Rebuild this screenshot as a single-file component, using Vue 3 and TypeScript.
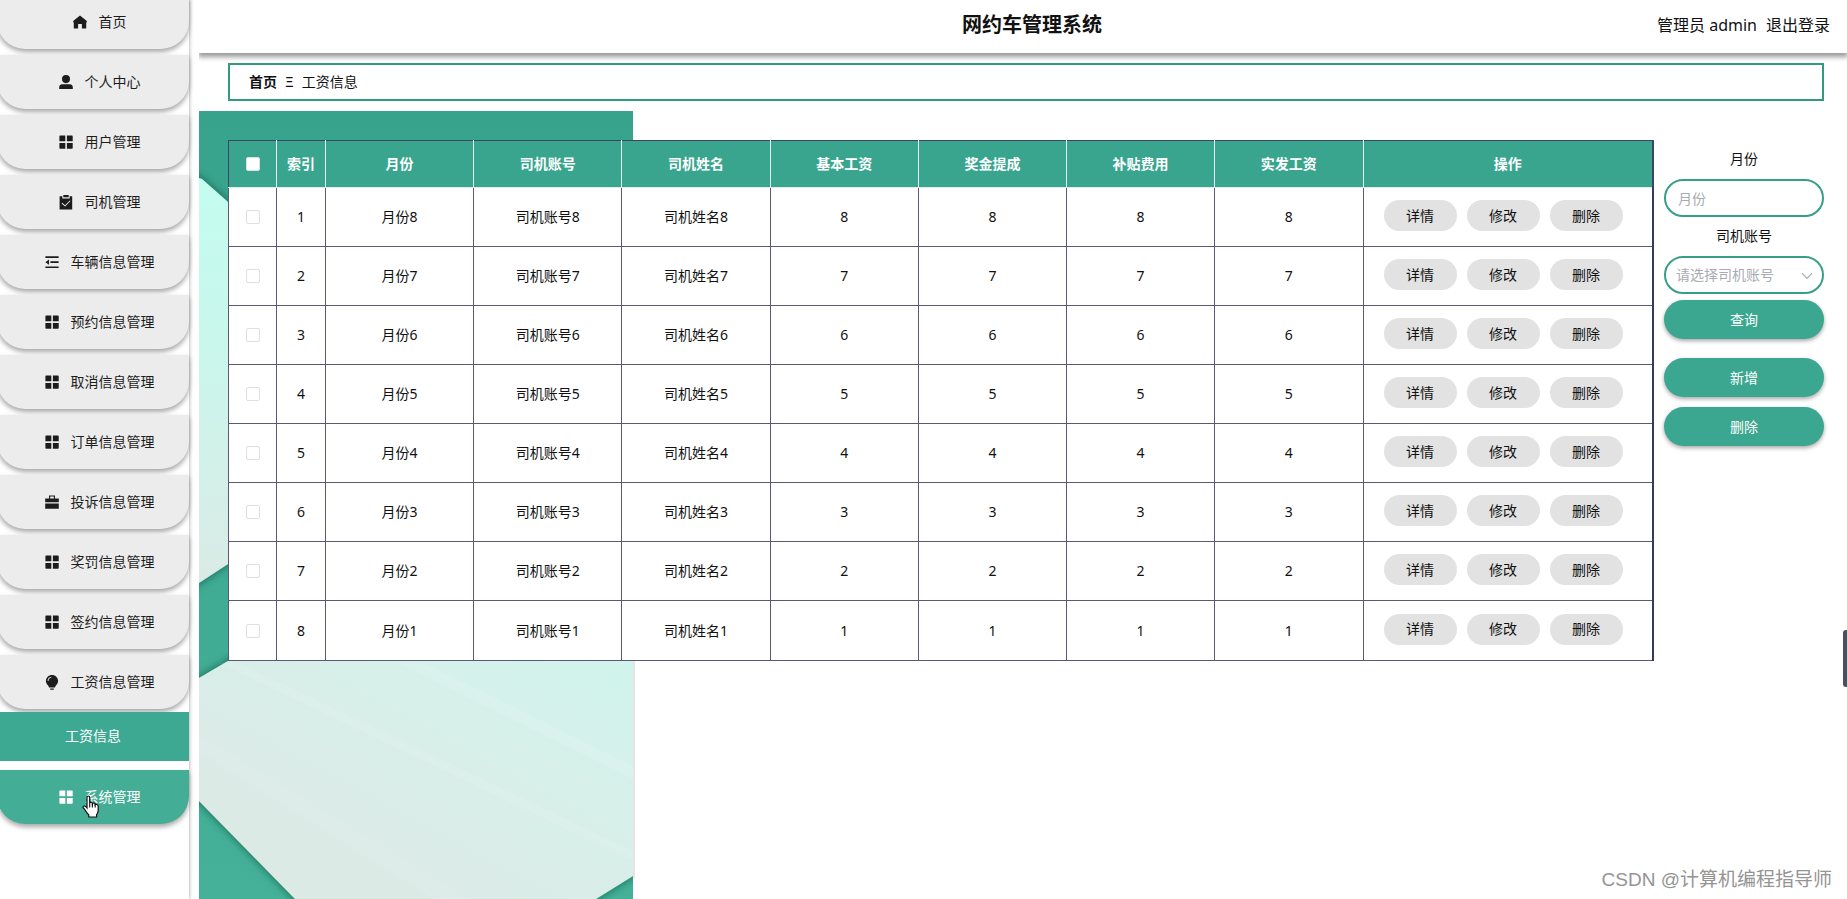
<script setup lang="ts">
import { ref } from 'vue'

type IconName = 'home' | 'user' | 'grid' | 'clip' | 'fold' | 'case' | 'bulb'
interface MenuItem { label: string; icon: IconName; active?: boolean; child?: string }

const menu: MenuItem[] = [
  { label: '首页', icon: 'home' },
  { label: '个人中心', icon: 'user' },
  { label: '用户管理', icon: 'grid' },
  { label: '司机管理', icon: 'clip' },
  { label: '车辆信息管理', icon: 'fold' },
  { label: '预约信息管理', icon: 'grid' },
  { label: '取消信息管理', icon: 'grid' },
  { label: '订单信息管理', icon: 'grid' },
  { label: '投诉信息管理', icon: 'case' },
  { label: '奖罚信息管理', icon: 'grid' },
  { label: '签约信息管理', icon: 'grid' },
  { label: '工资信息管理', icon: 'bulb', child: '工资信息' },
  { label: '系统管理', icon: 'grid', active: true },
]

const icons: Record<IconName, string> = {
  home: 'M7 0.4 L13.8 6 V7.4 H13.2 V13.4 H8.9 V8.9 H5.1 V13.4 H0.8 V7.4 H0.2 V6 Z',
  user: 'M7 0 A4 4.1 0 0 1 7 8.2 A4 4.1 0 0 1 7 0 Z M3.2 9.2 H10.8 Q13.8 9.4 13.8 12.4 V14 H0.2 V12.4 Q0.2 9.4 3.2 9.2 Z',
  grid: 'M1.1 0.5 H6.3 V6.2 H0.4 V1.2 Q0.4 0.5 1.1 0.5 Z M7.9 0.5 H13 Q13.7 0.5 13.7 1.2 V6.2 H7.9 Z M0.4 7.9 H6.3 V13.7 H1.1 Q0.4 13.7 0.4 13 Z M7.9 7.9 H13.7 V13 Q13.7 13.7 13 13.7 H7.9 Z',
  clip: 'M0.6 1.2 H3.3 V3.4 H10.7 V1.2 H13.2 V14.4 H0.6 Z M4.3 0 H9.7 V2.3 H4.3 Z M3.2 7.8 L2.6 8.5 L6 11.5 L11.5 6.1 L10.9 5.4 L6 10.2 Z',
  fold: 'M0.4 1.2 H13.6 V2.9 H0.4 Z M5.4 6.3 H13.6 V8 H5.4 Z M0.4 11.4 H13.6 V13.1 H0.4 Z M0.4 7.2 L4 4.6 V9.7 Z',
  case: 'M4 0.4 H10 V3.6 H13.8 V7.2 H0.2 V3.6 H4 Z M5.1 1.6 V3.6 H8.9 V1.6 Z M0.2 8.4 H13.8 V13.8 H0.2 Z',
  bulb: 'M7 0 C10.4 0 13.1 2.7 13.1 6 C13.1 8.9 10.6 10 9.9 12.5 H4.1 C3.4 10 0.9 8.9 0.9 6 C0.9 2.7 3.6 0 7 0 Z M2.6 6 H3.5 A3.6 3.6 0 0 1 6.4 2.6 V1.8 A4.5 4.5 0 0 0 2.6 6 Z M5.2 13.4 H8.8 V14.8 H5.2 Z',
}

const columns = ['月份', '司机账号', '司机姓名', '基本工资', '奖金提成', '补贴费用', '实发工资']
const rows = [8, 7, 6, 5, 4, 3, 2, 1]
const actions = ['详情', '修改', '删除']
const month = ref('')
const account = ref('')
</script>

<template>
  <div class="app">
    <aside class="sidebar">
      <nav class="menu">
        <template v-for="m in menu" :key="m.label">
          <a href="#" class="item" :class="{ active: m.active }">
            <svg class="icon" viewBox="0 0 14 15" aria-hidden="true"><path :d="icons[m.icon]" fill-rule="evenodd" /></svg>
            <span>{{ m.label }}</span>
            <svg v-if="m.active" class="cursor" viewBox="0 0 18 24" aria-hidden="true">
              <path d="M5 2.4 Q5 1 6.3 1 Q7.7 1 7.7 2.4 V8 Q8 7 9.2 7.2 Q10.4 7.4 10.4 8.6 Q11 7.8 12.2 8.1 Q13.2 8.4 13.2 9.6 Q14 9 15 9.5 Q16.2 10 16.2 11.4 V15.5 Q16 18 14.6 19.6 V22 H6.8 V20 Q4.6 18 3.4 15.6 Q2.6 14 1.2 12.8 Q0.6 11.4 2 11 Q3.4 10.8 5 13 Z" fill="#fff" stroke="#111" stroke-width="1.2" />
              <path d="M7.7 8 V12.5 M10.4 8.6 V12.5 M13.2 9.6 V12.5" fill="none" stroke="#111" stroke-width="1.1" />
            </svg>
          </a>
          <a v-if="m.child" href="#" class="sub">{{ m.child }}</a>
        </template>
      </nav>
    </aside>

    <div class="main">
      <header class="top">
        <h1>网约车管理系统</h1>
        <div class="account">
          <span>管理员 admin</span>
          <a href="#">退出登录</a>
        </div>
      </header>

      <nav class="crumb" aria-label="breadcrumb">
        <a href="#"><b>首页</b></a>
        <span class="sep">Ξ</span>
        <span>工资信息</span>
      </nav>

      <main class="content">
        <svg class="art" viewBox="0 0 440 788" aria-hidden="true">
          <defs>
            <linearGradient id="green" x1="0" y1="0" x2="0" y2="1">
              <stop offset="0" stop-color="#38a38c" />
              <stop offset="1" stop-color="#45b198" />
            </linearGradient>
            <linearGradient id="mint" x1="0" y1="0" x2="0" y2="1">
              <stop offset="0" stop-color="#c3fdf0" />
              <stop offset="0.4" stop-color="#c9f7ec" />
              <stop offset="1" stop-color="#dbeae5" />
            </linearGradient>
            <linearGradient id="pale" gradientUnits="userSpaceOnUse" x1="400" y1="480" x2="230" y2="790">
              <stop offset="0" stop-color="#cdf6ee" />
              <stop offset="0.5" stop-color="#d7f0ea" />
              <stop offset="1" stop-color="#dceae6" />
            </linearGradient>
            <filter id="shade" x="-10%" y="-10%" width="120%" height="120%">
              <feDropShadow dx="0" dy="0" stdDeviation="5" flood-color="#03493a" flood-opacity="0.75" />
            </filter>
            <clipPath id="frame"><rect width="434" height="788" /></clipPath>
          </defs>
          <rect x="432" y="540" width="4" height="227" fill="#e4e4e4" />
          <g clip-path="url(#frame)">
            <rect width="434" height="788" fill="url(#green)" />
            <path d="M-20 52 L0 67 L3 68 L29 91 L250 280 L29 453 L0 472 L-20 485 Z" fill="url(#mint)" filter="url(#shade)" />
            <path d="M-20 579 L0 567 L29 550 L250 420 L460 420 L460 749 L434 765 L397 788 L360 810 L118 810 L96 788 L0 690 L-20 670 Z" fill="url(#pale)" filter="url(#shade)" />
            <g fill="#fff" fill-opacity="0.1">
              <path d="M20 552 L40 552 L434 740 L434 750 Z" />
              <path d="M200 552 L225 552 L434 655 L434 668 Z" />
              <path d="M0 625 L270 788 L235 788 L0 640 Z" fill-opacity="0.08" />
            </g>
          </g>
        </svg>

        <div class="table-box">
          <table class="grid">
            <colgroup>
              <col class="c-check" /><col class="c-index" />
              <col v-for="c in columns" :key="c" />
              <col class="c-action" />
            </colgroup>
            <thead>
              <tr>
                <th><input type="checkbox" aria-label="全选" /></th>
                <th>索引</th>
                <th v-for="c in columns" :key="c">{{ c }}</th>
                <th>操作</th>
              </tr>
            </thead>
            <tbody>
              <tr v-for="(n, i) in rows" :key="n">
                <td><input type="checkbox" :aria-label="'选择' + (i + 1)" /></td>
                <td>{{ i + 1 }}</td>
                <td v-for="(c, k) in columns" :key="c">{{ k < 3 ? c + n : n }}</td>
                <td>
                  <div class="actions">
                    <button v-for="a in actions" :key="a" type="button">{{ a }}</button>
                  </div>
                </td>
              </tr>
            </tbody>
          </table>
        </div>

        <form class="filter" @submit.prevent>
          <label for="month">月份</label>
          <input id="month" v-model="month" type="text" placeholder="月份" />
          <label for="account">司机账号</label>
          <div class="select">
            <select id="account" v-model="account">
              <option value="">请选择司机账号</option>
            </select>
            <svg class="chevron" viewBox="0 0 12 8" aria-hidden="true"><path d="M1 1.2 L6 6.4 L11 1.2" fill="none" stroke="#a8acb4" stroke-width="1.2" /></svg>
          </div>
          <button type="submit">查询</button>
          <button type="button" class="add">新增</button>
          <button type="button" class="del">删除</button>
        </form>
      </main>
    </div>

    <div class="handle"></div>
    <div class="watermark">CSDN @计算机编程指导师</div>
  </div>
</template>

<style>
body {
  margin: 0;
  background: #fff;
}
</style>

<style scoped>
.app {
  position: relative;
  display: flex;
  gap: 10px;
  height: 100vh;
  overflow: hidden;
  box-sizing: border-box;
  background: #fff;
  color: #111;
  font: 14px/20px "Noto Sans", "Noto Sans CJK SC", sans-serif;
}
.app * {
  box-sizing: border-box;
}
a {
  color: inherit;
  text-decoration: none;
}
button,
input,
select {
  font: inherit;
}
.sidebar {
  flex: 0 0 189px;
  box-shadow: 0 0 4px rgba(0, 0, 0, 0.4);
}
.menu {
  display: flex;
  flex-direction: column;
  gap: 6px;
  margin: -5px 0 0 -3px;
}
.item {
  position: relative;
  display: flex;
  align-items: center;
  justify-content: center;
  gap: 12px;
  height: 54px;
  padding-left: 13px;
  border-radius: 0 0 28px 28px;
  background: #ececec;
  color: #1c1c1c;
  box-shadow: 0 3px 5px rgba(0, 0, 0, 0.35);
}
.item.active {
  background: #44ad96;
  color: #fff;
}
.icon {
  width: 14px;
  height: 15px;
  fill: currentColor;
}
.cursor {
  position: absolute;
  left: 85px;
  top: 25px;
  width: 18px;
  height: 24px;
}
.sub {
  position: relative;
  height: 49px;
  margin: -3px 0 3px;
  background: #3da992;
  color: #fff;
  line-height: 48px;
  text-align: center;
}
.main {
  flex: 1;
  min-width: 0;
  display: flex;
  flex-direction: column;
}
.top {
  display: grid;
  grid-template-columns: 1fr auto 1fr;
  align-items: center;
  height: 53px;
  padding: 0 17px 4px 35px;
  box-shadow: 0 3px 5px 1px rgba(0, 0, 0, 0.4);
  clip-path: inset(0 0 -12px 0);
}
.top h1 {
  grid-column: 2;
  margin: 0;
  font-size: 20px;
  line-height: 28px;
}
.account {
  display: flex;
  justify-content: flex-end;
  gap: 9px;
  font-size: 16px;
  line-height: 24px;
}
.crumb {
  display: flex;
  align-items: center;
  gap: 8px;
  height: 38px;
  margin: 10px 23px 10px 29px;
  padding: 0 19px;
  border: 2px solid #30997f;
}
.content {
  position: relative;
  flex: 1;
  display: flex;
  align-items: flex-start;
  gap: 10px;
  padding: 29px 23px 0 29px;
}
.art {
  position: absolute;
  left: 0;
  top: 0;
  width: 440px;
  height: 788px;
}
.table-box {
  position: relative;
  flex: 1;
  min-width: 0;
}
.grid {
  width: 100%;
  table-layout: fixed;
  border-collapse: collapse;
  background: #fff;
  text-align: center;
  border: 1px solid #3c4564;
  border-right: 2px solid #3c4564;
}
.c-check {
  width: 48px;
}
.c-index {
  width: 49px;
}
.c-action {
  width: 290px;
}
.grid th {
  height: 47px;
  padding: 0;
  border-right: 1px solid #e4f4f0;
  border-bottom: 1px solid #d8efea;
  background: #39a58e;
  color: #fff;
}
.grid td {
  height: 59px;
  padding: 0;
  border: 1px solid #5c5873;
}
.grid tbody tr:last-child td {
  height: 60px;
}
.grid td:last-child {
  border-right: 2px solid #353a58;
}
.grid input {
  display: block;
  appearance: none;
  width: 14px;
  height: 14px;
  margin: 0 auto;
  border: 1px solid #dcdfe6;
  border-radius: 2px;
  background: #fff;
}
.actions {
  display: flex;
  gap: 10px;
  padding: 0 0 3px 20px;
}
.actions button {
  width: 73px;
  height: 31px;
  padding: 0;
  border: 0;
  border-radius: 16px;
  background: #e2e2e2;
  color: #111;
}
.filter {
  flex: 0 0 160px;
  display: flex;
  flex-direction: column;
  text-align: center;
}
.filter label {
  height: 39px;
  line-height: 38px;
}
.filter input,
.filter select {
  width: 100%;
  height: 38px;
  padding: 0 12px;
  border: 2px solid #389f87;
  border-radius: 19px;
  background: #fff;
  color: #a8abb2;
  appearance: none;
}
.filter input::placeholder {
  color: #a8abb2;
}
.filter select {
  display: block;
  padding: 0 10px;
}
.select {
  position: relative;
}
.chevron {
  position: absolute;
  right: 11px;
  top: 16px;
  width: 12px;
  height: 8px;
}
.filter button {
  height: 39px;
  margin-top: 6px;
  padding: 0;
  border: 0;
  border-radius: 20px;
  background: #3ba790;
  color: #fff;
  box-shadow: 0 2px 4px rgba(0, 0, 0, 0.35);
}
.filter .add {
  margin-top: 19px;
}
.filter .del {
  margin-top: 10px;
}
.handle {
  position: absolute;
  right: 0;
  top: 630px;
  width: 4px;
  height: 57px;
  border-radius: 3px 0 0 3px;
  background: #47505c;
}
.watermark {
  position: absolute;
  right: 15px;
  bottom: 6px;
  color: #949494;
  font: 19px/26px "Liberation Sans", "Noto Sans CJK SC", sans-serif;
}
</style>
